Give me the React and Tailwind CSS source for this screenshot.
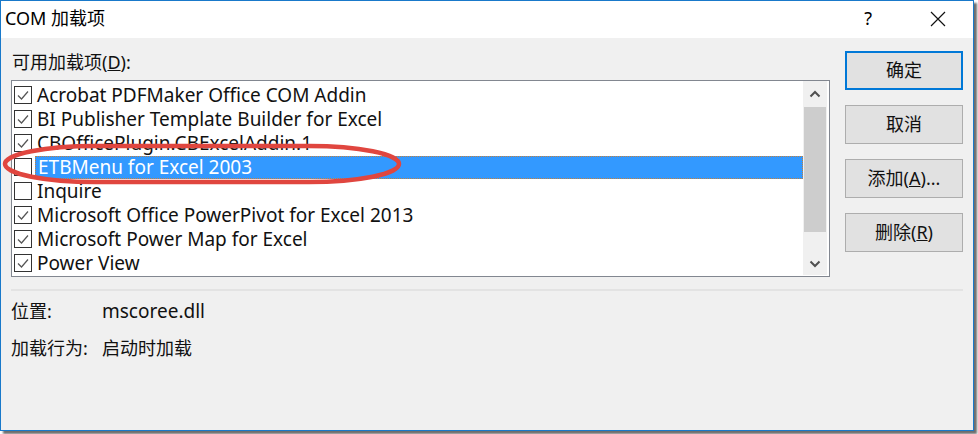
import React from "react";

const addins = [
  { name: "Acrobat PDFMaker Office COM Addin", checked: true },
  { name: "BI Publisher Template Builder for Excel", checked: true },
  { name: "CBOfficePlugin.CBExcelAddin.1", checked: true },
  { name: "ETBMenu for Excel 2003", checked: false, selected: true },
  { name: "Inquire", checked: false },
  { name: "Microsoft Office PowerPivot for Excel 2013", checked: true },
  { name: "Microsoft Power Map for Excel", checked: true },
  { name: "Power View", checked: true },
];

function CheckBox({ checked }) {
  return (
    <div className="w-[18px] h-[18px] border border-[#333333] bg-white flex items-center justify-center shrink-0">
      {checked && (
        <svg width="14" height="14" viewBox="0 0 14 14">
          <path d="M2 7.5 L5.5 11 L12 3.5" fill="none" stroke="#555555" strokeWidth="1.2" />
        </svg>
      )}
    </div>
  );
}

function DialogButton({ children, primary }) {
  return (
    <button
      className={`w-[118px] h-[39px] bg-[#e1e1e1] text-[18px] text-[#111111] ${
        primary ? "border-2 border-[#0078d7]" : "border border-[#adadad]"
      }`}
    >
      {children}
    </button>
  );
}

export default function App() {
  return (
    <div className="relative w-[978px] h-[434px] bg-white" style={{ fontFamily: '"Noto Sans", "Noto Sans CJK SC", sans-serif' }}>
      <div className="w-[974px] h-[431px] border border-[#1979ca] bg-[#f0f0f0] flex flex-col shadow-[3px_3px_2px_#6e6e6e]">
        {/* title bar */}
        <div className="h-[37px] bg-white flex items-center pl-[4px] text-[18px] text-black">
          <span className="flex-1 -mt-[2px]">COM 加载项</span>
          <span className="text-[18px] mr-[58px] -mt-[2px]">?</span>
          <svg width="16" height="16" viewBox="0 0 16 16" className="mr-[27px] -mt-[2px]">
            <path d="M1 1 L15 15 M15 1 L1 15" stroke="#111111" strokeWidth="1.2" />
          </svg>
        </div>

        <div className="flex pl-[10px] pt-[12px]">
          {/* left column */}
          <div className="w-[819px] flex flex-col">
            <div className="h-[30px] text-[18px] text-[#111111] pl-[1px] leading-[24px]">
              可用加载项(<span className="underline">D</span>):
            </div>
            <div className="h-[197px] border border-[#828790] bg-white flex pt-[2px]">
              <div className="w-[791px] flex flex-col">
                {addins.map((a) => (
                  <div key={a.name} className="h-[24px] flex items-center pl-[2px]">
                    <CheckBox checked={a.checked} />
                    <div
                      className={`ml-[3px] h-[23px] flex-1 flex items-center pl-[2px] text-[19px] whitespace-nowrap ${
                        a.selected
                          ? "bg-[#3399ff] text-white border border-dotted border-[#c08040]"
                          : "text-[#111111]"
                      }`}
                    >
                      {a.name}
                    </div>
                  </div>
                ))}
              </div>
              <div className="w-[24px] -mt-[2px] mb-[1px] bg-[#f0f0f0] flex flex-col items-center">
                <div className="h-[26px] flex items-center justify-center">
                  <svg width="12" height="8" viewBox="0 0 12 8">
                    <path d="M1.5 6.5 L6 2 L10.5 6.5" fill="none" stroke="#505050" strokeWidth="2" />
                  </svg>
                </div>
                <div className="w-[22px] h-[125px] bg-[#cdcdcd]" />
                <div className="flex-1 flex items-end justify-center pb-[7px]">
                  <svg width="12" height="8" viewBox="0 0 12 8">
                    <path d="M1.5 1.5 L6 6 L10.5 1.5" fill="none" stroke="#505050" strokeWidth="2" />
                  </svg>
                </div>
              </div>
              <div className="w-[2px]" />
            </div>
          </div>

          {/* buttons */}
          <div className="ml-[15px] flex flex-col gap-[15px] pt-[1px]">
            <DialogButton primary>确定</DialogButton>
            <DialogButton>取消</DialogButton>
            <DialogButton>添加(<span className="underline">A</span>)...</DialogButton>
            <DialogButton>删除(<span className="underline">R</span>)</DialogButton>
          </div>
        </div>

        <div className="ml-[10px] mt-[12px] w-[952px] h-[2px] bg-[#e3e3e3]" />

        <div className="pl-[10px] pt-[8px] text-[18px] text-[#111111] flex flex-col gap-[13px]">
          <div className="flex h-[24px] items-center">
            <span className="w-[91px]">位置:</span>
            <span className="text-[19px]">mscoree.dll</span>
          </div>
          <div className="flex h-[24px] items-center">
            <span className="w-[91px]">加载行为:</span>
            <span>启动时加载</span>
          </div>
        </div>
      </div>

      {/* red annotation ellipse */}
      <svg
        width="402"
        height="44"
        viewBox="0 0 402 44"
        className="absolute left-[1px] top-[142px] pointer-events-none"
      >
        <rect x="4" y="4" width="394" height="36" rx="90" ry="18" fill="none" stroke="#e0463f" strokeWidth="4.5" />
      </svg>
    </div>
  );
}
